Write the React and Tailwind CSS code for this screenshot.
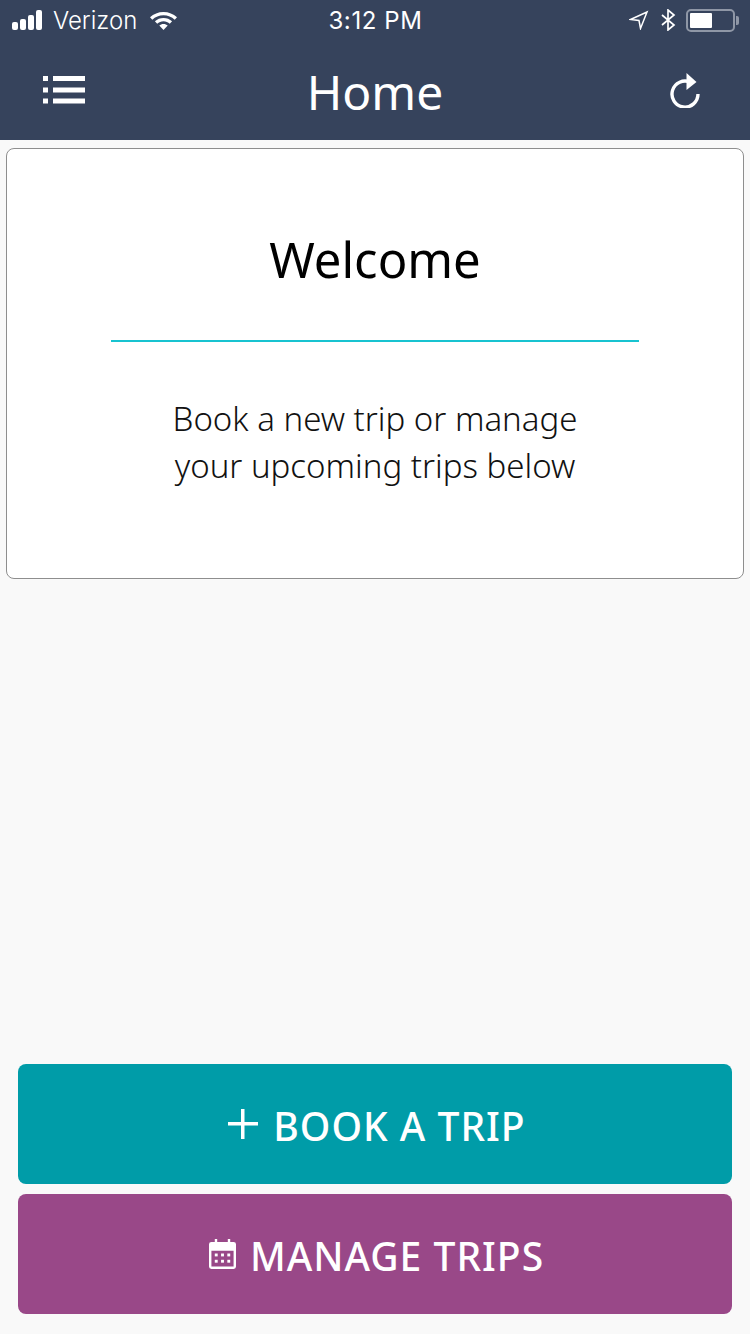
const sans = 'font-["Noto_Sans",sans-serif]'
const ui = 'font-["Inter",sans-serif]'

function StatusBar() {
  return (
    <div className={`h-10 flex items-center justify-between pl-3 pr-[11px] text-white ${ui}`}>
      <div className="w-[220px] flex items-center">
        <div className="flex items-end gap-[2px] h-[20px] w-[34px]">
          <span className="w-[6px] h-[8px] rounded-[2px] bg-white" />
          <span className="w-[6px] h-[11px] rounded-[2px] bg-white" />
          <span className="w-[6px] h-[15px] rounded-[2px] bg-white" />
          <span className="w-[6px] h-[20px] rounded-[2px] bg-white" />
        </div>
        <span className="ml-[7px] mt-[1px] text-[24px] leading-none font-light">Verizon</span>
        <svg className="ml-[12px]" width="29" height="20" viewBox="0 0 29 20" fill="#fff">
          <path d="M14.5 2C9.3 2 4.6 4 1 7.2l2.3 2.5C6.3 7 10.2 5.3 14.5 5.3s8.200 1.700 11.200 4.400L28 7.200C24.400 4 19.700 2 14.500 2z" />
          <path d="M14.500 8c-3.300 0-6.300 1.200-8.600 3.300l2.300 2.500c1.700-1.500 3.900-2.500 6.300-2.500s4.600 1 6.300 2.500l2.300-2.500C20.800 9.200 17.800 8 14.500 8z" />
          <path d="M14.500 14c-1.700 0-3.100.6-4.200 1.600l4.200 4.400 4.200-4.400c-1.100-1-2.500-1.600-4.200-1.600z" />
        </svg>
      </div>
      <span className="mt-[1px] text-[24px] leading-none font-normal tracking-[0.6px]">3:12 PM</span>
      <div className="w-[220px] flex items-center justify-end">
        <svg width="20" height="20" viewBox="0 0 20 20" fill="none" stroke="#fff" strokeWidth="1.5" strokeLinejoin="miter">
          <path d="M1.500 9.500 18 2 11.500 18.500 10 10.500z" />
        </svg>
        <svg className="ml-[11px]" width="16" height="22" viewBox="0 0 16 22" fill="none" stroke="#fff" strokeWidth="1.700">
          <path d="M2 6l12 10-6 5V1l6 5L2 16" />
        </svg>
        <div className="ml-[10px] w-[49px] h-[23px] rounded-[5px] border-2 border-[#8f97a6] p-[2px]">
          <div className="w-[22px] h-full bg-white rounded-[1px]" />
        </div>
        <span className="ml-[1px] w-[3px] h-[9px] rounded-r-[2px] bg-[#8f97a6]" />
      </div>
    </div>
  )
}

function NavBar() {
  return (
    <div className="h-[100px] flex items-center justify-between px-[43px]">
      <svg width="42" height="28" viewBox="0 0 42 28" fill="#fff">
        <rect x="0" y="0" width="5" height="5" />
        <rect x="0" y="11.500" width="5" height="5" />
        <rect x="0" y="22.500" width="5" height="5" />
        <rect x="10" y="0" width="32" height="5" />
        <rect x="10" y="11.500" width="32" height="5" />
        <rect x="10" y="22.500" width="32" height="5" />
      </svg>
      <h1 className={`mt-[3px] text-[48px] leading-none text-white font-normal ${sans}`}>Home</h1>
      <div className="w-[42px] flex justify-end">
        <svg className="mr-[6px]" width="32" height="36" viewBox="0 0 32 36" fill="none">
          <path d="M21.500 10.300A13 13 0 1 0 29 22" stroke="#fff" strokeWidth="3.400" />
          <path d="M17.500 1 27.500 10 17.500 18z" fill="#fff" />
        </svg>
      </div>
    </div>
  )
}

function ActionButton({ icon, label, color }) {
  return (
    <button className={`h-[120px] w-full pl-[3px] rounded-[8px] flex items-center justify-center text-white ${color}`}>
      {icon}
      <span className={`mt-[2px] text-[39px] leading-none font-medium tracking-[1px] ${sans}`}>{label}</span>
    </button>
  )
}

export default function App() {
  return (
    <div className="w-[750px] h-[1334px] flex flex-col bg-[#f9f9f9]">
      <div className="bg-[#36435c]">
        <StatusBar />
        <NavBar />
      </div>

      <div className="mt-2 mx-[6px] h-[431px] flex flex-col items-center bg-white border border-[#8e8e8e] rounded-[8px]">
        <h2 className={`mt-[80px] text-[49px] leading-[60px] text-black font-normal ${sans}`}>Welcome</h2>
        <div className="mt-[51px] w-[528px] h-[2px] bg-[#18c3d0]" />
        <p className={`mt-[53px] text-center text-[33px] leading-[47px] text-[#111] font-light ${sans}`}>
          Book a new trip or manage<br />your upcoming trips below
        </p>
      </div>

      <div className="mt-auto mb-[20px] mx-[18px] flex flex-col gap-[10px]">
        <ActionButton
          color="bg-[#009ca8]"
          label="BOOK A TRIP"
          icon={
            <svg className="mr-[14px]" width="32" height="32" viewBox="0 0 32 32" fill="#fff">
              <rect x="14" y="1" width="3.500" height="30" />
              <rect x="1" y="14" width="30" height="3.500" />
            </svg>
          }
        />
        <ActionButton
          color="bg-[#994888]"
          label="MANAGE TRIPS"
          icon={
            <svg className="mr-[14px]" width="27" height="30" viewBox="0 0 28 31" fill="#fff">
              <path fillRule="evenodd" d="M6 0h2.500v3h11V0H22v3h3.500A2.500 2.500 0 0 1 28 5.500v23a2.500 2.500 0 0 1-2.500 2.500h-23A2.500 2.500 0 0 1 0 28.500v-23A2.500 2.500 0 0 1 2.500 3H6zM2.500 12v16.500h23V12z" />
              <rect x="6" y="15" width="3" height="3" />
              <rect x="12.500" y="15" width="3" height="3" />
              <rect x="19" y="15" width="3" height="3" />
              <rect x="6" y="21.500" width="3" height="3" />
              <rect x="12.500" y="21.500" width="3" height="3" />
              <rect x="19" y="21.500" width="3" height="3" />
            </svg>
          }
        />
      </div>
    </div>
  )
}
